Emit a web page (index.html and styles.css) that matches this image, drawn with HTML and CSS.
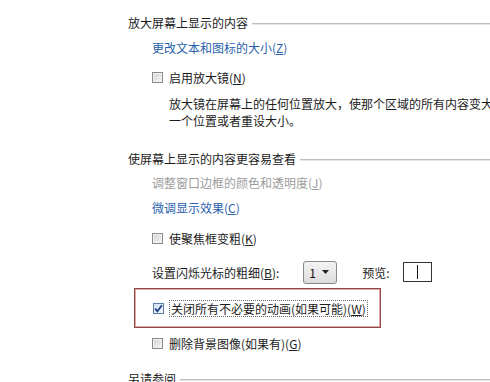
FILE: index.html
```html
<!DOCTYPE html>
<html lang="zh-CN">
<head>
<meta charset="utf-8">
<title>轻松访问</title>
<link rel="stylesheet" href="styles.css">
</head>
<body>
<div class="page">
  <div class="heading h1"><span>放大屏幕上显示的内容</span><i class="rule"></i></div>
  <div class="group">
    <div class="row link r-link1">更改文本和图标的大小(<u>Z</u>)</div>
    <div class="row cbrow r-cb1"><span class="cb"></span><span>启用放大镜(<u>N</u>)</span></div>
    <div class="desc">
      <div class="line">放大镜在屏幕上的任何位置放大，使那个区域的所有内容变大。您可以移动放大镜</div>
      <div class="line">一个位置或者重设大小。</div>
    </div>
  </div>

  <div class="heading h2"><span>使屏幕上显示的内容更容易查看</span><i class="rule"></i></div>
  <div class="group">
    <div class="row link disabled r-link2">调整窗口边框的颜色和透明度(<u>J</u>)</div>
    <div class="row link r-link3">微调显示效果(<u>C</u>)</div>
    <div class="row cbrow r-cb2"><span class="cb"></span><span>使聚焦框变粗(<u>K</u>)</span></div>
    <div class="cursor-row">
      <span>设置闪烁光标的粗细(<u>B</u>):</span>
      <span class="combo"><span class="combo-val">1</span><svg class="arrow" width="7" height="4" viewBox="0 0 7 4"><path d="M0 0H7L3.5 4Z" fill="#222"/></svg></span>
      <span class="preview-label">预览:</span>
      <span class="preview"><i class="caret"></i></span>
    </div>
    <div class="highlight">
      <div class="row cbrow"><span class="cb checked"><svg width="9" height="9" viewBox="0 0 9 9"><path d="M1.2 4.6L3.4 7.3L7.9 1.2" fill="none" stroke="#1d3f86" stroke-width="1.8"/></svg></span><span class="focus">关闭所有不必要的动画(如果可能)(<u>W</u>)</span></div>
    </div>
    <div class="row cbrow r-cb4"><span class="cb"></span><span>删除背景图像(如果有)(<u>G</u>)</span></div>
  </div>

  <div class="heading h3"><span>另请参阅</span><i class="rule"></i></div>
</div>
</body>
</html>
```

FILE: styles.css
```css
html, body {
  margin: 0;
  padding: 0;
  background: #ffffff;
  overflow: hidden;
}
body {
  width: 490px;
  height: 382px;
  font-family: "Noto Sans CJK SC", "Microsoft YaHei", sans-serif;
  font-size: 12px;
  line-height: 17px;
  color: #1c1c1c;
}
.page {
  padding-left: 128px;
  display: flex;
  flex-direction: column;
}
u { text-decoration: underline; text-underline-offset: 1px; }

.heading {
  display: flex;
  align-items: center;
  height: 17px;
  color: #1c1c1c;
  white-space: nowrap;
}
.heading .rule {
  flex: 1;
  height: 0;
  margin-left: 4px;
  margin-top: 3px;
  border-top: 1px solid #bdbdbd;
  border-bottom: 1px solid #e6e6e6;
}
.h1 { margin-top: 14px; }
.h2 { margin-top: 21px; }
.h3 { margin-top: 18px; }

.group {
  padding-left: 24px;
  display: flex;
  flex-direction: column;
}
.row {
  height: 17px;
  white-space: nowrap;
}
.link { color: #2a5fad; }
.link.disabled { color: #9c9c9c; }
.r-link1 { margin-top: 8px; }
.r-cb1 { margin-top: 13px; }
.r-link2 { margin-top: 7px; }
.r-link3 { margin-top: 8px; }
.r-cb2 { margin-top: 14px; }
.r-cb4 { margin-top: 7px; }

.cbrow {
  display: flex;
  align-items: center;
  gap: 6px;
}
.cb {
  box-sizing: border-box;
  width: 11px;
  height: 11px;
  border: 1px solid #8a8a8a;
  background: linear-gradient(135deg, #d2d2d2, #f6f6f6);
  box-shadow: inset 0 0 0 1px #f2f2f2;
  display: inline-flex;
  align-items: center;
  justify-content: center;
  flex: none;
}
.cb.checked {
  border-color: #5c7ea8;
  background: linear-gradient(135deg, #cfe0f2, #f4f8fc);
  box-shadow: none;
}

.desc {
  margin-top: 9px;
  padding-left: 17px;
  white-space: nowrap;
}
.desc .line { height: 17px; }

.cursor-row {
  margin-top: 13px;
  height: 24px;
  display: flex;
  align-items: center;
  white-space: nowrap;
}
.combo {
  box-sizing: border-box;
  margin-left: 24px;
  width: 34px;
  height: 23px;
  border: 1px solid #8a8a8a;
  border-radius: 3px;
  background: linear-gradient(#f4f4f4, #dcdcdc);
  display: flex;
  align-items: center;
  justify-content: space-between;
  padding: 0 7px 0 5px;
}
.combo-val { color: #111; }
.preview-label { margin-left: 25px; }
.preview {
  box-sizing: border-box;
  margin-left: 13px;
  width: 29px;
  height: 20px;
  border: 1px solid #333;
  display: flex;
  justify-content: center;
  align-items: center;
}
.caret {
  width: 1px;
  height: 14px;
  background: #111;
}

.highlight {
  box-sizing: border-box;
  margin-top: 4px;
  margin-left: -18px;
  width: 247px;
  height: 40px;
  border: 1px solid #9a4646;
  box-shadow: inset 0 0 0 1px #d9aaaa;
  padding: 11px 0 0 18px;
}
.focus {
  outline: 1px dotted #6a6a6a;
  outline-offset: 0;
  padding: 0 1px;
  line-height: 15px;
}
```
